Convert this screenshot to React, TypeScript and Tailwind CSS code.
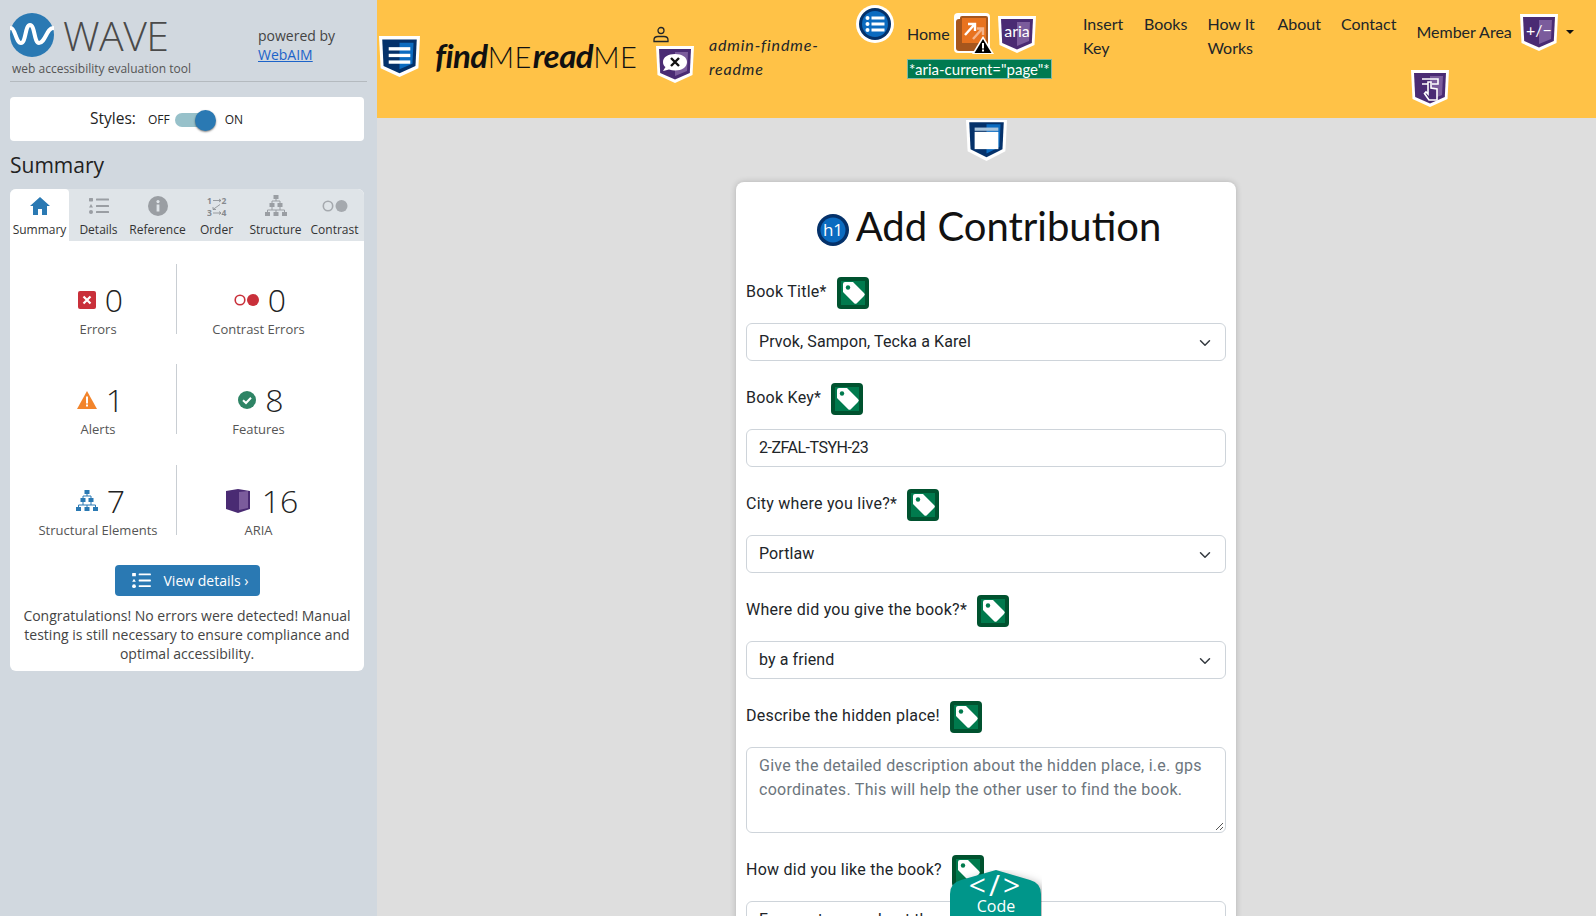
import React from "react";

function Shield({ dark, light, children, w = 38, h = 38 }: { dark: string; light: string; children?: React.ReactNode; w?: number; h?: number }) {
  return (
    <svg width={w} height={h} viewBox="0 0 38 38" preserveAspectRatio="none" className="block shrink-0">
      <path d="M0 1 H38 L36.5 30 L19 38 L1.5 30 Z" fill="#fff" />
      <path d="M3 4 H35 L33.8 28 L19 34.5 L4.2 28 Z" fill={dark} />
      <path d="M19 7 H32 L31 26 L19 31 Z" fill={light} />
      {children}
    </svg>
  );
}

const PURPLE = "#4a2b73";
const PURPLE_L = "#7b5c9c";
const BLUE = "#04316a";
const BLUE_L = "#0b6bc0";

function Tag() {
  return (
    <svg width="32" height="32" viewBox="0 0 32 32" className="block shrink-0">
      <rect width="32" height="32" rx="4" fill="#00522f" />
      <rect x="4" y="4" width="24" height="24" fill="#007a4d" />
      <path d="M6 7 a2 2 0 0 1 2-2 h8 l11 11 a2 2 0 0 1 0 3 l-7 7 a2 2 0 0 1-3 0 L6 15z" fill="#fff" />
      <circle cx="11" cy="10.5" r="2.2" fill="#007a4d" />
    </svg>
  );
}

function Tree({ color, size = 22 }: { color: string; size?: number }) {
  return (
    <svg width={size} height={size} viewBox="0 0 22 22" className="block shrink-0">
      <g fill={color}>
        <rect x="8.5" y="0" width="5" height="4" />
        <rect x="4.5" y="8" width="5" height="4" />
        <rect x="12.5" y="8" width="5" height="4" />
        <rect x="0" y="17" width="5" height="4" />
        <rect x="8.5" y="17" width="5" height="4" />
        <rect x="17" y="17" width="5" height="4" />
      </g>
      <path d="M11 4V6M7 8V6H15V8M7 12V15M15 12V15M2.5 17V15H19.5V17M11 15V17" stroke={color} fill="none" strokeWidth="1" />
    </svg>
  );
}

function ListIcon({ color, w = 20, h = 16 }: { color: string; w?: number; h?: number }) {
  return (
    <svg width={w} height={h} viewBox="0 0 20 16" className="block shrink-0">
      <g fill={color}>
        <rect x="0" y="0" width="4" height="3.4" rx="0.6" />
        <path d="M2 6 L4 9.4 H0 Z" />
        <circle cx="2" cy="14" r="2" />
        <rect x="7" y="0.5" width="13" height="2" rx="0.5" />
        <rect x="7" y="7" width="13" height="2" rx="0.5" />
        <rect x="7" y="13" width="13" height="2" rx="0.5" />
      </g>
    </svg>
  );
}

function Tab({ label, active, children }: { label: string; active?: boolean; children: React.ReactNode }) {
  return (
    <div className={`flex w-[59px] shrink-0 flex-col items-center rounded-t-[4px] ${active ? "bg-white" : ""}`}>
      <div className="flex h-[31px] items-center pt-[3px]">{children}</div>
      <div className="text-[12px] leading-[20px] text-[#333] whitespace-nowrap">{label}</div>
    </div>
  );
}

function Stat({ icon, n, label, divider, gap = 9, pad = "pl-[5px]" }: { icon: React.ReactNode; n: string; label: string; divider?: boolean; gap?: number; pad?: string }) {
  return (
    <div className={`flex h-[70px] flex-col items-center pt-[14px] ${divider ? "border-r border-[#c9ced3]" : ""}`}>
      <div className={`flex h-[42px] items-center pt-[1px] ${pad}`} style={{ gap }}>
        {icon}
        <span className="text-[32px] font-light leading-[41px] text-[#222]">{n}</span>
      </div>
      <div className="text-[13px] leading-[18px] text-[#555] whitespace-nowrap">{label}</div>
    </div>
  );
}

function Label({ text }: { text: string }) {
  return (
    <div className="flex h-[32px] items-center gap-[10px] text-[16px] tracking-[0.25px] text-[#212529]">
      <span className="relative top-[-1px]">{text}</span>
      <Tag />
    </div>
  );
}

function Chevron() {
  return (
    <svg width="16" height="12" viewBox="0 0 16 16" className="absolute right-[12px] top-[13px]" fill="none" stroke="#343a40" strokeWidth="2" strokeLinecap="round" strokeLinejoin="round">
      <path d="m2 5 6 6 6-6" />
    </svg>
  );
}

function Select({ value }: { value: string }) {
  return (
    <div className="relative mt-[14px] mb-[22px] h-[38px] rounded-[6px] border border-[#ced4da] bg-white px-[12px] text-[16px] tracking-[0.1px] leading-[36px] text-[#212529]">
      {value}
      <Chevron />
    </div>
  );
}

function NavLink({ children }: { children: React.ReactNode }) {
  return <div className="px-[10px] pt-[12px] text-[16px] leading-[24px]">{children}</div>;
}

export default function App() {
  return (
    <div className="flex h-[916px] w-[1596px] overflow-hidden">
      <aside className="relative w-[377px] shrink-0 bg-[#d1d8df] px-[10px] font-['Open_Sans',sans-serif]">
        <div className="flex h-[82px] border-b border-[#b4babf]">
          <div className="w-[248px] pt-[13px]">
            <div className="flex h-[44px] items-center gap-[9px]">
              <svg width="44" height="44" viewBox="0 0 44 44" className="block shrink-0">
                <circle cx="22" cy="22" r="22" fill="#2a79b3" />
                <path d="M1 15 C5 15 6 30 11 30 C16 30 15 12 20 12 C25 12 24 30 29 30 C35 30 37 15 43 15" fill="none" stroke="#fff" strokeWidth="4" strokeLinecap="round" />
              </svg>
              <span className="text-[41px] font-light leading-[40px] text-[#4a4a4a] tracking-[-0.5px]">WAVE</span>
            </div>
            <div className="ml-[2px] mt-[3px] text-[12px] leading-[18px] text-[#555] whitespace-nowrap">web accessibility evaluation tool</div>
          </div>
          <div className="pt-[26px] text-[14px] leading-[19px] text-[#444]">
            <div>powered by</div>
            <a href="#" className="text-[#1c63c9] underline">WebAIM</a>
          </div>
        </div>

        <div className="mt-[15px] flex h-[44px] w-[354px] items-center rounded-[4px] bg-white pl-[80px]">
          <span className="w-[58px] text-[15.5px] text-[#222]">Styles:</span>
          <span className="relative top-[1px] text-[12px] text-[#222]">OFF</span>
          <span className="relative top-[1px] ml-[5px] h-[14px] w-[34px] rounded-full bg-[#97c1ca]">
            <span className="absolute left-[20px] top-[-3px] h-[21px] w-[21px] rounded-full bg-[#2a79b3] shadow-[0_1px_2px_rgba(0,0,0,0.5)]" />
          </span>
          <span className="relative top-[1px] ml-[16px] text-[12px] text-[#222]">ON</span>
        </div>

        <h2 className="mt-[6px] text-[21px] leading-[36px] text-[#222]">Summary</h2>

        <div className="mt-[6px] w-[354px] overflow-hidden rounded-[6px] bg-white">
          <div className="flex h-[52px] bg-[#dfe4e8]">
            <Tab label="Summary" active>
              <svg width="20" height="18" viewBox="0 0 20 18"><path d="M10 0 L20 9 H17 V18 H12 V12 H8 V18 H3 V9 H0 Z" fill="#2a79b3" /></svg>
            </Tab>
            <Tab label="Details"><ListIcon color="#9a9ea3" /></Tab>
            <Tab label="Reference">
              <svg width="20" height="20" viewBox="0 0 20 20">
                <circle cx="10" cy="10" r="10" fill="#9a9ea3" />
                <rect x="8.6" y="8.5" width="2.8" height="7" fill="#dfe4e8" />
                <circle cx="10" cy="5.6" r="1.6" fill="#dfe4e8" />
              </svg>
            </Tab>
            <Tab label="Order">
              <svg width="20" height="21" viewBox="0 0 20 21" fill="#85898e" stroke="none">
                <text x="0" y="7.5" fontSize="8.5" fontWeight="700">1</text>
                <text x="14.5" y="7.5" fontSize="8.5" fontWeight="700">2</text>
                <text x="0" y="20" fontSize="8.5" fontWeight="700">3</text>
                <text x="14.5" y="20" fontSize="8.5" fontWeight="700">4</text>
                <path d="M6 4.5H14M12 3L14 4.5L12 6M6 17H14M12 15.5L14 17L12 18.5M13 8.5L6 13.5M6 11V13.5H9" fill="none" stroke="#85898e" strokeWidth="0.8" />
              </svg>
            </Tab>
            <Tab label="Structure"><Tree color="#9a9ea3" /></Tab>
            <Tab label="Contrast">
              <svg width="26" height="12" viewBox="0 0 26 12">
                <circle cx="6" cy="6" r="4.7" fill="none" stroke="#a5a9ae" strokeWidth="1.6" />
                <circle cx="19.5" cy="6" r="6" fill="#a5a9ae" />
              </svg>
            </Tab>
          </div>

          <div className="h-[430px] pt-[23px]">
            <div className="ml-[10px] grid w-[320px] grid-cols-[157px_163px] gap-y-[30px]">
              <Stat divider n="0" label="Errors" icon={
                <svg width="18" height="18" viewBox="0 0 18 18"><rect width="18" height="18" rx="2" fill="#c9303a" /><path d="M5.5 5.5L12.5 12.5M12.5 5.5L5.5 12.5" stroke="#fff" strokeWidth="2.2" /></svg>
              } />
              <Stat n="0" label="Contrast Errors" pad="pl-[3px]" icon={
                <svg width="25" height="12" viewBox="0 0 25 12"><circle cx="6" cy="6" r="4.8" fill="none" stroke="#c9303a" strokeWidth="1.6" /><circle cx="19" cy="6" r="6" fill="#c9303a" /></svg>
              } />
              <Stat divider n="1" label="Alerts" icon={
                <svg width="20" height="18" viewBox="0 0 20 18"><path d="M10 0 L20 18 H0 Z" fill="#f2842b" /><rect x="9" y="5.5" width="2" height="7" fill="#fff" /><rect x="9" y="13.5" width="2" height="2" fill="#fff" /></svg>
              } />
              <Stat n="8" label="Features" icon={
                <svg width="18" height="18" viewBox="0 0 18 18"><circle cx="9" cy="9" r="9" fill="#2e8465" /><path d="M5 9.2L8 12L13 6.8" fill="none" stroke="#fff" strokeWidth="2" /></svg>
              } />
              <div className="mt-[1px]"><Stat divider n="7" label="Structural Elements" icon={<Tree color="#2a79b3" />} /></div>
              <div className="mt-[1px]"><Stat gap={12} pad="pl-[7px]" n="16" label="ARIA" icon={
                <svg width="24" height="24" viewBox="0 0 24 24"><path d="M0 2 L12 0 L24 2 V20 L12 24 L0 20 Z" fill="#4a2b73" /><path d="M13 3 L22 2 V19 L13 21 Z" fill="#7b5c9c" /></svg>
              } /></div>
            </div>
            <div className="mt-[30px] flex justify-center">
              <div className="flex h-[31px] w-[145px] items-center rounded-[4px] bg-[#2a79b3] pb-[1px] pl-[17px] text-[14px] text-white">
                <ListIcon color="#fff" w={19} h={15} />
                <span className="ml-[13px]">View details ›</span>
              </div>
            </div>
            <p className="mx-auto mt-[10px] w-[340px] text-center text-[14px] leading-[19px] text-[#444]">
              Congratulations! No errors were detected! Manual testing is still necessary to ensure compliance and optimal accessibility.
            </p>
          </div>
        </div>
      </aside>

      <div className="relative min-w-0 flex-1 bg-[#dedede]">
        <header className="relative flex h-[118px] items-start bg-[#ffc247] font-['Lato',sans-serif] text-[#212529]">
          <div className="ml-[2px] mt-[35px]">
            <Shield dark={BLUE} light={BLUE_L} w={41} h={42}>
              <rect x="9" y="11" width="20" height="3" fill="#fff" />
              <rect x="9" y="17" width="20" height="3" fill="#fff" />
              <rect x="9" y="23" width="20" height="3" fill="#fff" />
            </Shield>
          </div>
          <div className="ml-[15px] mt-[34px] w-[205px] whitespace-nowrap text-[33px] leading-[42px] text-[#111]">
            <span className="font-bold italic tracking-[-0.5px]">find</span><span className="text-[29px] font-light tracking-[0.5px]">ME</span><span className="ml-[1px] font-bold italic tracking-[-0.5px]">read</span><span className="text-[29px] font-light tracking-[0.5px]">ME</span>
          </div>
          <div className="ml-[16px] mt-[26px] flex flex-col">
            <svg width="16" height="17" viewBox="0 0 16 16" className="-ml-[3px]" fill="none" stroke="#212529" strokeWidth="1.3">
              <circle cx="8" cy="4" r="3" />
              <path d="M1 15 V13.5 C1 11 3 10 5 10 H11 C13 10 15 11 15 13.5 V15 Z" />
            </svg>
            <div className="mt-[2px]">
              <Shield dark={PURPLE} light={PURPLE_L}>
                <path d="M19 9 C12 9 7 12 7 17 C7 19.5 8 21 9.5 22 L7 26 L13 24.5 C15 25.2 17 25.5 19 25.5 C26 25.5 31 22 31 17 C31 12 26 9 19 9 Z" fill="#fff" />
                <path d="M15 13L23 21M23 13L15 21" stroke="#111" strokeWidth="2.4" />
              </Shield>
            </div>
          </div>
          <div className="ml-[15px] mt-[33px] w-[147px] text-[16px] italic leading-[24px] tracking-[0.85px]">admin-findme-readme</div>

          <div className="mt-[5px]">
            <svg width="38" height="38" viewBox="0 0 38 38" className="block shrink-0">
              <circle cx="19" cy="19" r="19" fill="#fff" />
              <circle cx="19" cy="19" r="16" fill="#04316a" />
              <circle cx="19" cy="19" r="13" fill="#0b6bc0" />
              <g fill="#fff">
                <circle cx="11.5" cy="13" r="2" /><circle cx="11.5" cy="19" r="2" /><circle cx="11.5" cy="25" r="2" />
                <rect x="15.5" y="11.5" width="13" height="3" /><rect x="15.5" y="17.5" width="13" height="3" /><rect x="15.5" y="23.5" width="13" height="3" />
              </g>
            </svg>
          </div>

          <div className="ml-[13px] w-[166px] pt-[13px]">
            <div className="flex h-[42px] items-center">
              <span className="text-[16px]">Home</span>
              <svg width="42" height="42" viewBox="0 0 42 42" className="ml-[3px] block shrink-0">
                <rect x="1" y="0" width="36" height="40" rx="4" fill="#fff" />
                <rect x="3" y="6" width="28" height="32" rx="3" fill="#a6561d" />
                <rect x="7" y="3" width="28" height="30" rx="2" fill="#a6561d" />
                <rect x="9" y="5" width="24" height="25" fill="#e8731f" />
                <path d="M12 22L21 12M15 11H22V18" stroke="#fff" strokeWidth="2.4" fill="none" />
                <path d="M20 26L29 16M24 15.5H30V22" stroke="#f5b48a" strokeWidth="2.4" fill="none" />
                <path d="M30 23 L41 41 H19 Z" fill="#fff" />
                <path d="M30 26 L38.5 40 H21.5 Z" fill="#000" />
                <rect x="29" y="30" width="2" height="5.5" fill="#fff" />
                <rect x="29" y="36.5" width="2" height="2" fill="#fff" />
              </svg>
              <div className="ml-[3px]">
                <Shield dark={PURPLE} light={PURPLE_L}>
                  <text x="19" y="22" textAnchor="middle" fontSize="16" fill="#fff" fontFamily="'Lato',sans-serif">aria</text>
                </Shield>
              </div>
            </div>
            <div className="mt-[4px] inline-block h-[20px] whitespace-nowrap border border-[#7fb8a6] bg-[#007a50] px-[1px] text-[15px] leading-[18px] text-white">*aria-current="page"*</div>
          </div>

          <NavLink><div className="w-[41px]">Insert Key</div></NavLink>
          <NavLink>Books</NavLink>
          <NavLink><div className="w-[50px]">How It Works</div></NavLink>
          <NavLink>About</NavLink>
          <NavLink>Contact</NavLink>

          <div className="ml-[10px] mt-[13px] flex h-[38px] items-center">
            <span className="text-[16px] whitespace-nowrap">Member Area</span>
            <div className="ml-[8px]">
              <Shield dark={PURPLE} light={PURPLE_L}>
                <text x="19" y="23" textAnchor="middle" fontSize="16" fill="#fff" fontFamily="'Lato',sans-serif">+/−</text>
              </Shield>
            </div>
            <span className="ml-[8px] h-0 w-0 border-x-[4px] border-t-[4px] border-x-transparent border-t-[#111]" />
          </div>

          <div className="absolute left-[1034px] top-[69px]">
            <Shield dark={PURPLE} light={PURPLE_L}>
              <path d="M11 10 H27 V15 H21 M17 15 H11 Z" fill="none" stroke="#fff" strokeWidth="1.6" />
              <path d="M17 13 V25 L15 23 L13.5 24.5 L18 31 H26 V20 L20 19 V13 Z" fill={PURPLE} stroke="#fff" strokeWidth="1.6" />
            </Shield>
          </div>
        </header>

        <div className="absolute left-[589px] top-[120px]">
          <svg width="41" height="41" viewBox="0 0 38 38" className="block">
            <path d="M0 0 H38 L36.5 29 L19 38 L1.5 29 Z" fill="#fff" />
            <path d="M3 2 H35 L33.8 27 L19 34.5 L4.2 27 Z" fill={BLUE} />
            <path d="M19 4 H32 L31 25 L19 31 Z" fill={BLUE_L} />
            <rect x="8" y="7" width="22" height="3" fill="#a9c4dc" />
            <rect x="8" y="11" width="22" height="16" fill="#fff" />
          </svg>
        </div>

        <main className="ml-[359px] mt-[64px] w-[500px] rounded-[8px] bg-white px-[10px] pt-[14px] shadow-[0_0_6px_rgba(0,0,0,0.2)] font-['Roboto',sans-serif]">
          <h1 className="flex h-[60px] items-center justify-center gap-[7px] pl-[6px] font-['Lato',sans-serif] text-[40px] leading-[60px] text-[#111]">
            <svg width="32" height="32" viewBox="0 0 32 32" className="mt-[7px] block shrink-0">
              <circle cx="16" cy="16" r="16" fill="#04316a" />
              <circle cx="16" cy="16" r="12.5" fill="#0b6bc0" />
              <text x="16" y="22" textAnchor="middle" fontSize="17" fill="#fff" fontFamily="'Open Sans',sans-serif">h1</text>
            </svg>
            <span>Add Contribution</span>
          </h1>
          <div className="mt-[21px]">
            <Label text="Book Title*" />
            <Select value="Prvok, Sampon, Tecka a Karel" />
            <Label text="Book Key*" />
            <div className="mt-[14px] mb-[22px] h-[38px] rounded-[6px] border border-[#ced4da] bg-white px-[12px] text-[16px] leading-[36px] tracking-[-0.5px] text-[#212529]">2-ZFAL-TSYH-23</div>
            <Label text="City where you live?*" />
            <Select value="Portlaw" />
            <Label text="Where did you give the book?*" />
            <Select value="by a friend" />
            <Label text="Describe the hidden place!" />
            <div className="relative mt-[14px] mb-[22px] h-[86px] rounded-[6px] border border-[#ced4da] bg-white px-[12px] pt-[6px] text-[16px] leading-[24px] tracking-[0.28px] text-[#6c757d]">
              Give the detailed description about the hidden place, i.e. gps coordinates. This will help the other user to find the book.
              <svg width="9" height="9" viewBox="0 0 9 9" className="absolute bottom-[1px] right-[1px]" stroke="#555" strokeWidth="1"><path d="M1 8L8 1M5 8L8 5" /></svg>
            </div>
            <Label text="How did you like the book?" />
            <div className="mt-[14px] h-[38px] rounded-[6px] border border-[#ced4da] bg-white px-[12px] text-[16px] leading-[36px] text-[#212529]">Few sentences about the guide</div>
          </div>
        </main>

        <div className="absolute left-[573px] top-[870px] h-[46px] w-[92px] overflow-hidden text-center font-['Open_Sans',sans-serif] text-white">
          <svg width="92" height="60" viewBox="0 0 92 60" className="absolute left-0 top-0 drop-shadow-[3px_3px_5px_rgba(0,0,0,0.35)]">
            <path d="M46 0 L80 10 Q91 13 91 24 V60 H0 V24 Q0 13 11 10 Z" fill="#00968a" />
          </svg>
          <div className="relative pt-[2px] text-[30px] leading-[25px] tracking-[3px]">&lt;/&gt;</div>
          <div className="relative text-[16px] leading-[18px]">Code</div>
        </div>
      </div>
    </div>
  );
}
